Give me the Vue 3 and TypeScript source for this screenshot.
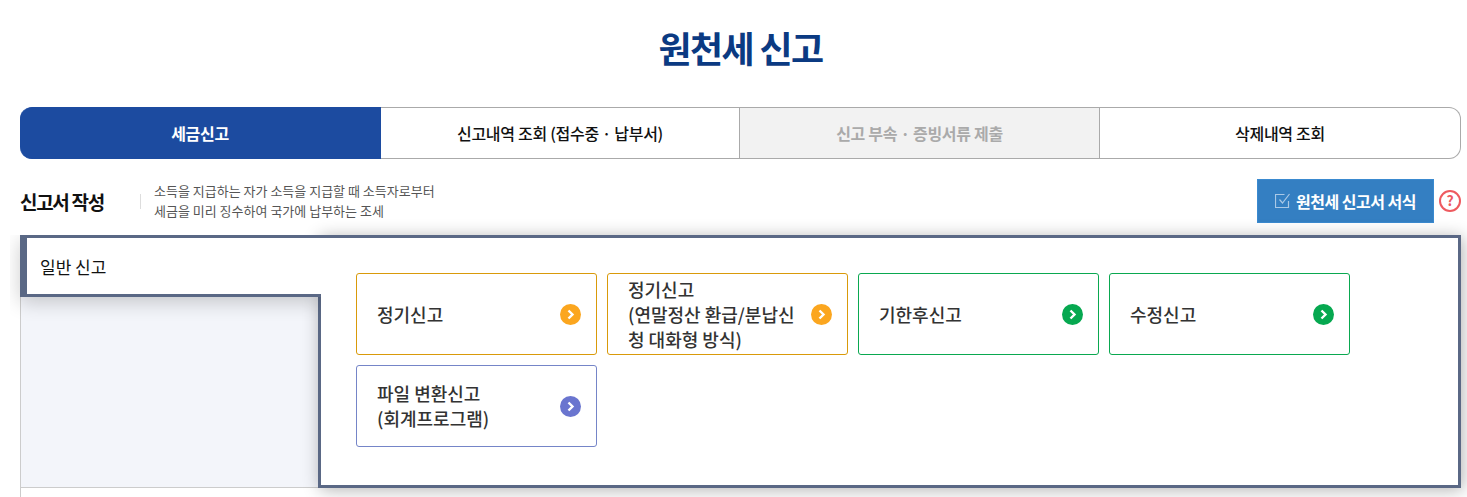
<script setup lang="ts">
interface ReportCard {
  label: string
  tone: 'orange' | 'green' | 'purple'
}

const tabs = [
  { label: '세금신고', state: 'active' },
  { label: '신고내역 조회 (접수중 · 납부서)', state: '' },
  { label: '신고 부속 · 증빙서류 제출', state: 'disabled' },
  { label: '삭제내역 조회', state: '' },
]

const cards: ReportCard[] = [
  { label: '정기신고', tone: 'orange' },
  { label: '정기신고\n(연말정산 환급/분납신청 대화형 방식)', tone: 'orange' },
  { label: '기한후신고', tone: 'green' },
  { label: '수정신고', tone: 'green' },
  { label: '파일 변환신고\n(회계프로그램)', tone: 'purple' },
]
</script>

<template>
  <div class="page">
    <h1 class="title">원천세 신고</h1>

    <ul class="tabs">
      <li v-for="tab in tabs" :key="tab.label" class="tab" :class="tab.state">{{ tab.label }}</li>
    </ul>

    <div class="head">
      <h2 class="head-title">신고서 작성</h2>
      <p class="head-desc">소득을 지급하는 자가 소득을 지급할 때 소득자로부터<br />세금을 미리 징수하여 국가에 납부하는 조세</p>
      <button class="form-btn">
        <svg width="16" height="16" viewBox="0 0 16 16" fill="none" stroke="#a9c8e6" stroke-width="1.2">
          <path d="M13.5 8v6.5h-13v-13h9" />
          <path d="M4.5 6.5 7.5 10l7-9" />
        </svg>
        원천세 신고서 서식
      </button>
      <span class="help">?</span>
    </div>

    <div class="report">
      <div class="side">
        <div class="side-tab">일반 신고</div>
        <div class="side-fill"></div>
      </div>
      <div class="panel">
        <a v-for="card in cards" :key="card.label" class="card" :class="card.tone">
          <span class="card-text">{{ card.label }}</span>
          <svg class="card-icon" width="21" height="21" viewBox="0 0 21 21">
            <circle cx="10.5" cy="10.5" r="10.5" />
            <path d="M8.5 6.5l4 4-4 4" fill="none" stroke="#fff" stroke-width="2.4" />
          </svg>
        </a>
      </div>
    </div>
    <div class="below"></div>
  </div>
</template>

<style>
html,
body {
  overflow: hidden;
  background: #fff;
}
</style>

<style scoped>
.page {
  padding: 0 6px 0 20px;
  font-family: "Noto Sans CJK KR", "Noto Sans", sans-serif;
  color: #333;
}

.title {
  margin: 0;
  height: 107px;
  padding-top: 20px;
  box-sizing: border-box;
  text-align: center;
  font-size: 36px;
  line-height: 54px;
  font-weight: 700;
  letter-spacing: -1.6px;
  color: #0b3a82;
}

.tabs {
  display: grid;
  grid-template-columns: 361px 359px 360px 361px;
  height: 52px;
  margin: 0;
  padding: 0;
  list-style: none;
}

.tab {
  display: flex;
  align-items: center;
  justify-content: center;
  border: 1px solid #aaa;
  border-left: none;
  font-size: 16px;
  font-weight: 500;
  letter-spacing: -0.3px;
  color: #111;
}

.tab:first-child {
  border-radius: 12px 0 0 12px;
}

.tab:last-child {
  border-radius: 0 12px 12px 0;
}

.tab.active {
  background: #1c4ba0;
  border-color: #1c4ba0;
  color: #fff;
  font-weight: 700;
}

.tab.disabled {
  background: #f2f2f2;
  color: #aaa;
  font-weight: 700;
}

.head {
  display: flex;
  align-items: center;
  height: 44px;
  margin: 20px 0 12px;
}

.head-title {
  width: 120px;
  margin: 0;
  font-size: 19px;
  font-weight: 700;
  letter-spacing: -1.3px;
  color: #111;
}

.head-desc {
  flex: 1;
  margin: 0;
  padding-left: 14px;
  font-size: 13px;
  line-height: 20px;
  color: #555;
  background: linear-gradient(#ddd, #ddd) left center / 1px 15px no-repeat;
}

.form-btn {
  display: flex;
  align-items: center;
  justify-content: center;
  gap: 5px;
  width: 177px;
  height: 44px;
  padding: 0;
  border: 1px solid #3a8ad0;
  background: #347fc2;
  color: #fff;
  font: inherit;
  font-size: 16px;
  font-weight: 700;
  letter-spacing: -0.5px;
}

.help {
  width: 22px;
  height: 22px;
  margin-left: 5px;
  box-sizing: border-box;
  border: 2px solid #ee5a5f;
  border-radius: 50%;
  text-align: center;
  font-size: 14px;
  line-height: 17px;
  font-weight: 700;
  color: #ee5a5f;
}

.report {
  display: flex;
  height: 253px;
}

.side {
  display: flex;
  flex-direction: column;
  width: 298px;
  flex-shrink: 0;
}

.side-tab {
  position: relative;
  z-index: 2;
  width: 301px;
  height: 62px;
  box-sizing: border-box;
  padding: 16px 0 0 13px;
  border-top: 3px solid #5a6885;
  border-left: 7px solid #5a6885;
  border-bottom: 3px solid #5a6885;
  background: #fff;
  font-size: 17px;
  line-height: 25px;
  color: #111;
  box-shadow: 0 5px 20px rgba(0, 0, 0, 0.2);
  clip-path: inset(0 0 -30px -10px);
}

.side-fill {
  flex: 1;
  background: #f3f5fa;
  border-left: 1px solid #ccc;
  border-bottom: 1px solid #ccc;
}

.panel {
  position: relative;
  z-index: 1;
  flex: 1;
  display: flex;
  flex-wrap: wrap;
  align-content: flex-start;
  gap: 10px;
  padding: 35px;
  border: 3px solid #5a6885;
  background: #fff;
  box-shadow: 2px 2px 16px rgba(0, 0, 0, 0.3);
}

.card {
  display: flex;
  align-items: center;
  justify-content: space-between;
  width: 241px;
  height: 82px;
  box-sizing: border-box;
  padding: 0 15px 0 20px;
  border: 1px solid;
  border-radius: 3px;
  font-size: 18px;
  line-height: 25px;
  font-weight: 500;
  color: #333;
}

.card-text {
  width: 170px;
  white-space: pre-line;
  word-break: break-all;
}

.card-icon {
  flex-shrink: 0;
}

.card.orange {
  border-color: #d99a0a;
}

.card.orange .card-icon {
  fill: #fba61f;
}

.card.green {
  border-color: #0aa850;
}

.card.green .card-icon {
  fill: #06a850;
}

.card.purple {
  border-color: #7585c8;
}

.card.purple .card-icon {
  fill: #6a75cf;
}

.below {
  height: 40px;
  border-left: 1px solid #ccc;
}
</style>
